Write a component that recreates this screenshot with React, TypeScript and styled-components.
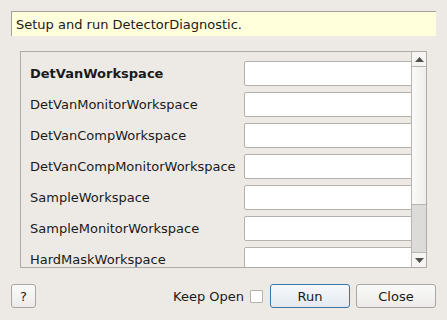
import styled, { createGlobalStyle } from 'styled-components'

const fields = [
  { name: 'DetVanWorkspace', required: true },
  { name: 'DetVanMonitorWorkspace' },
  { name: 'DetVanCompWorkspace' },
  { name: 'DetVanCompMonitorWorkspace' },
  { name: 'SampleWorkspace' },
  { name: 'SampleMonitorWorkspace' },
  { name: 'HardMaskWorkspace' },
]

const App = () => {
  return (
    <Dialog>
      <GlobalStyle />
      <Description>Setup and run DetectorDiagnostic.</Description>
      <ScrollArea>
        <Viewport>
          {fields.map((field) => (
            <Row key={field.name}>
              <Label $bold={field.required}>{field.name}</Label>
              <TextInput />
            </Row>
          ))}
        </Viewport>
        <ScrollBar>
          <ArrowButton>
            <svg width="9" height="5" viewBox="0 0 9 5">
              <path d="M0 5 L4.5 0 L9 5 Z" fill="#505050" />
            </svg>
          </ArrowButton>
          <Track />
          <Thumb />
          <ArrowButton $down>
            <svg width="9" height="5" viewBox="0 0 9 5">
              <path d="M0 0 L4.5 5 L9 0 Z" fill="#505050" />
            </svg>
          </ArrowButton>
        </ScrollBar>
      </ScrollArea>
      <ButtonBar>
        <SmallButton>?</SmallButton>
        <Spacer />
        <KeepOpen>
          Keep Open
          <CheckBox />
        </KeepOpen>
        <PushButton $default>Run</PushButton>
        <PushButton>Close</PushButton>
      </ButtonBar>
    </Dialog>
  )
}

const GlobalStyle = createGlobalStyle`
  body {
    margin: 0;
    background: #edeae6;
    font-family: "DejaVu Sans", sans-serif;
    font-size: 13px;
    color: #1a1a1a;
  }
`

const Dialog = styled.div`
  width: 447px;
  height: 320px;
  display: flex;
  flex-direction: column;
  background: #edeae6;
  box-sizing: border-box;
  padding-top: 11px;
`

const Description = styled.div`
  margin: 0 11px;
  height: 25px;
  box-sizing: border-box;
  background: #ffffdc;
  border-top: 1px solid #a0a0a0;
  border-left: 1px solid #a0a0a0;
  padding-left: 4px;
  display: flex;
  align-items: center;
  line-height: 1;
`

const ScrollArea = styled.div`
  margin: 15px 20px 0 20px;
  height: 217px;
  box-sizing: border-box;
  border: 1px solid #aeaaa6;
  display: flex;
`

const Viewport = styled.div`
  flex: 1;
  overflow: hidden;
  padding-top: 9px;
  display: flex;
  flex-direction: column;
  gap: 6px;
`

const Row = styled.div`
  display: flex;
  align-items: center;
  height: 25px;
  flex-shrink: 0;
`

const Label = styled.div<{ $bold?: boolean }>`
  width: 214px;
  padding-left: 9px;
  flex-shrink: 0;
  font-weight: ${(p) => (p.$bold ? 'bold' : 'normal')};
  white-space: nowrap;
`

const TextInput = styled.div`
  width: 180px;
  flex-shrink: 0;
  height: 25px;
  box-sizing: border-box;
  background: #ffffff;
  border: 1px solid #b4b0ac;
  border-radius: 2px;
`

const ScrollBar = styled.div`
  width: 14px;
  display: flex;
  flex-direction: column;
  border-left: 1px solid #b8b4b0;
`

const ArrowButton = styled.div<{ $down?: boolean }>`
  height: 14px;
  flex-shrink: 0;
  display: flex;
  align-items: center;
  justify-content: center;
  background: #f6f5f4;
  border-top: ${(p) => (p.$down ? '1px solid #b8b4b0' : 'none')};
  border-bottom: ${(p) => (p.$down ? 'none' : '1px solid #b8b4b0')};
`

const Track = styled.div`
  flex: 1;
  background: linear-gradient(to right, #fafafa, #eeedeb);
`

const Thumb = styled.div`
  height: 47px;
  flex-shrink: 0;
  background: #dcdbd9;
  border-top: 1px solid #b8b4b0;
`

const ButtonBar = styled.div`
  display: flex;
  align-items: center;
  margin: 16px 11px 0 11px;
  gap: 6px;
`

const Spacer = styled.div`
  flex: 1;
`

const ButtonBase = styled.div`
  height: 24px;
  box-sizing: border-box;
  border: 1px solid #aaa6a2;
  border-radius: 3px;
  background: linear-gradient(#fafaf9, #ecebe9);
  display: flex;
  align-items: center;
  justify-content: center;
`

const SmallButton = styled(ButtonBase)`
  width: 25px;
`

const PushButton = styled(ButtonBase)<{ $default?: boolean }>`
  width: 80px;
  border-color: ${(p) => (p.$default ? '#3a76a8' : '#aaa6a2')};
  background: ${(p) =>
    p.$default ? 'linear-gradient(#f6f8fa, #e3e9ef)' : 'linear-gradient(#fafaf9, #ecebe9)'};
`

const KeepOpen = styled.label`
  display: flex;
  align-items: center;
  gap: 6px;
  margin-right: 1px;
`

const CheckBox = styled.span`
  width: 13px;
  height: 13px;
  box-sizing: border-box;
  background: #ffffff;
  border: 1px solid #b4b0ac;
  border-radius: 1px;
`

export default App
